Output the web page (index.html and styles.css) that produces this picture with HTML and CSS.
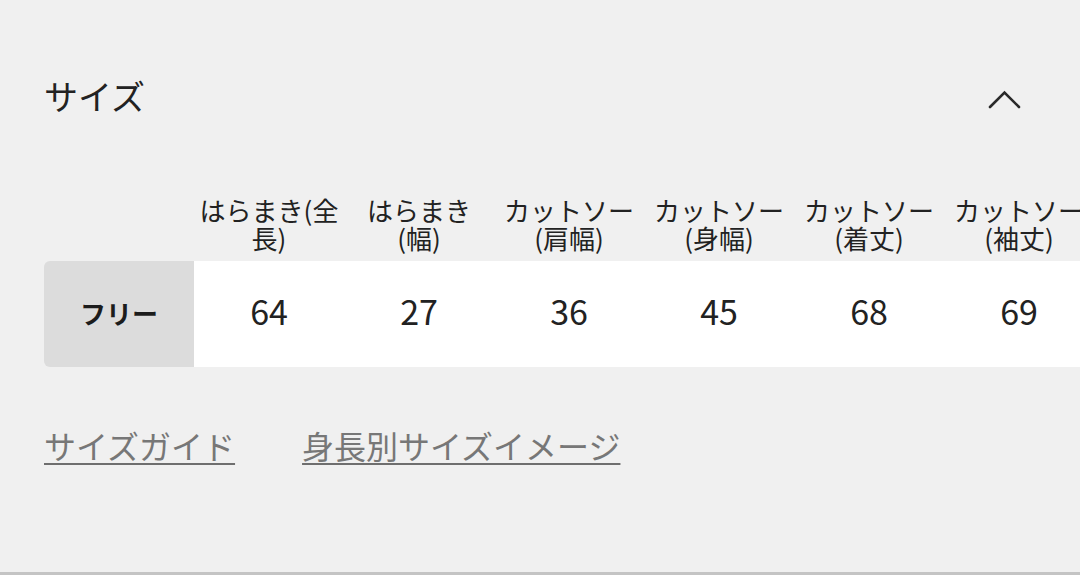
FILE: index.html
```html
<!DOCTYPE html>
<html lang="ja">
<head>
<meta charset="utf-8">
<link rel="stylesheet" href="styles.css">
</head>
<body>
<section class="panel">
  <div class="panel-head">
    <h2 class="panel-title">サイズ</h2>
    <svg class="chevron" width="36" height="22" viewBox="0 0 36 22"><polyline points="3,18 17.5,3.5 32,18" fill="none" stroke="#2a2a2a" stroke-width="2.6" stroke-linecap="round" stroke-linejoin="miter"/></svg>
  </div>
  <div class="table-wrap">
    <table class="size-table">
      <colgroup>
        <col class="c"><col class="c"><col class="c"><col class="c"><col class="c"><col class="c"><col class="c">
      </colgroup>
      <thead>
        <tr>
          <th class="corner"></th>
          <th>はらまき(全<br>長)</th>
          <th>はらまき<br>(幅)</th>
          <th>カットソー<br>(肩幅)</th>
          <th>カットソー<br>(身幅)</th>
          <th>カットソー<br>(着丈)</th>
          <th>カットソー<br>(袖丈)</th>
        </tr>
      </thead>
      <tbody>
        <tr>
          <th class="row-label">フリー</th>
          <td>64</td>
          <td>27</td>
          <td>36</td>
          <td>45</td>
          <td>68</td>
          <td>69</td>
        </tr>
      </tbody>
    </table>
  </div>
  <div class="links">
    <a class="link" href="#">サイズガイド</a>
    <a class="link" href="#">身長別サイズイメージ</a>
  </div>
</section>
</body>
</html>
```
FILE: styles.css
```css
html, body {
  margin: 0;
  padding: 0;
  width: 1080px;
  height: 575px;
  overflow: hidden;
  background: #f0f0f0;
}
body {
  font-family: "Noto Sans CJK JP", "Noto Sans", sans-serif;
  color: #222;
}
.panel {
  box-sizing: border-box;
  height: 575px;
  padding-left: 44px;
  border-bottom: 3px solid #c4c4c4;
}
.panel-head {
  display: flex;
  align-items: center;
  justify-content: space-between;
  padding-top: 70px;
  height: 52px;
  padding-right: 57px;
}
.panel-title {
  margin: 0;
  font-size: 34px;
  font-weight: 400;
  line-height: 52px;
  color: #222;
}
.chevron {
  display: block;
  margin-top: 8px;
}
.table-wrap {
  margin-top: 74px;
  width: 1036px;
  overflow: hidden;
}
.size-table {
  border-collapse: separate;
  border-spacing: 0;
  table-layout: fixed;
  width: 1050px;
}
.size-table col.c {
  width: 150px;
}
.size-table thead th {
  font-size: 26px;
  font-weight: 400;
  line-height: 28px;
  text-align: center;
  vertical-align: bottom;
  padding: 0 0 9px;
  white-space: nowrap;
  color: #222;
}
.size-table tbody td,
.size-table tbody th {
  height: 106px;
  box-sizing: border-box;
  padding: 0 0 8px;
  text-align: center;
  vertical-align: middle;
  background: #fff;
}
.size-table tbody td {
  font-size: 34px;
  font-weight: 400;
  color: #222;
}
.size-table tbody th.row-label {
  background: #dcdcdc;
  font-size: 26px;
  font-weight: 700;
  border-radius: 6px 0 0 6px;
  color: #1c1c1c;
  padding-bottom: 4px;
}
.links {
  display: flex;
  gap: 67px;
  margin-top: 58px;
}
.link {
  font-size: 32px;
  line-height: 40px;
  color: #777;
  text-decoration: underline;
  text-decoration-thickness: 2px;
  text-underline-offset: 4px;
  text-decoration-color: #6e6e6e;
}
```
